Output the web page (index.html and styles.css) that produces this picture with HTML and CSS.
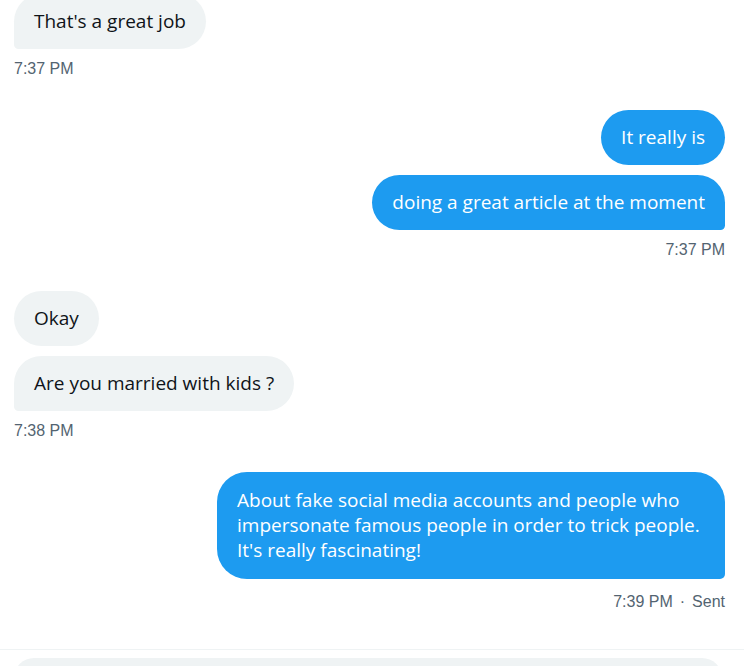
FILE: index.html
```html
<!DOCTYPE html>
<html>
<head>
<meta charset="utf-8">
<link rel="stylesheet" href="styles.css">
</head>
<body>
<div class="chat">
  <div class="group in first">
    <div class="bubble last">That's a great job</div>
    <div class="time">7:37 PM</div>
  </div>
  <div class="group out">
    <div class="bubble">It really is</div>
    <div class="bubble last">doing a great article at the moment</div>
    <div class="time">7:37 PM</div>
  </div>
  <div class="group in">
    <div class="bubble">Okay</div>
    <div class="bubble last">Are you married with kids ?</div>
    <div class="time">7:38 PM</div>
  </div>
  <div class="group out">
    <div class="bubble last wide">About fake social media accounts and people who impersonate famous people in order to trick people. It's really fascinating!</div>
    <div class="time">7:39 PM<span class="dot">·</span>Sent</div>
  </div>
</div>
<div class="composer">
  <div class="input"></div>
</div>
</body>
</html>
```
FILE: styles.css
```css
html, body {
  margin: 0;
  padding: 0;
  background: #ffffff;
  overflow: hidden;
}
body {
  width: 744px;
  height: 666px;
  font-family: "Open Sans", "Noto Sans", sans-serif;
}
.chat {
  display: flex;
  flex-direction: column;
  gap: 31px;
  padding: 0 19px 0 14px;
  margin-top: -6px;
  height: 655px;
  box-sizing: border-box;
}
.group {
  display: flex;
  flex-direction: column;
  gap: 10px;
}
.group.in { align-items: flex-start; }
.group.out { align-items: flex-end; }
.bubble {
  box-sizing: border-box;
  max-width: 508px;
  padding: 15px 20px;
  font-size: 19px;
  line-height: 25px;
  border-radius: 30px;
}
.in .bubble {
  background: #eff3f4;
  color: #0f1419;
}
.out .bubble {
  background: #1d9bf0;
  color: #ffffff;
}
.in .bubble.last { border-bottom-left-radius: 5px; }
.out .bubble.last { border-bottom-right-radius: 5px; }
.bubble.wide { padding: 16px 20px; }
.time {
  font-family: "Liberation Sans", Arial, sans-serif;
  font-size: 16px;
  line-height: 20px;
  color: #536471;
}
.dot { margin: 0 7px; }
.group.out:last-child .time { margin-top: 3px; }
.composer {
  border-top: 1px solid #eff3f4;
  padding: 8px 22px 0 14px;
}
.input {
  height: 40px;
  background: #eff3f4;
  border-radius: 20px;
}
```
